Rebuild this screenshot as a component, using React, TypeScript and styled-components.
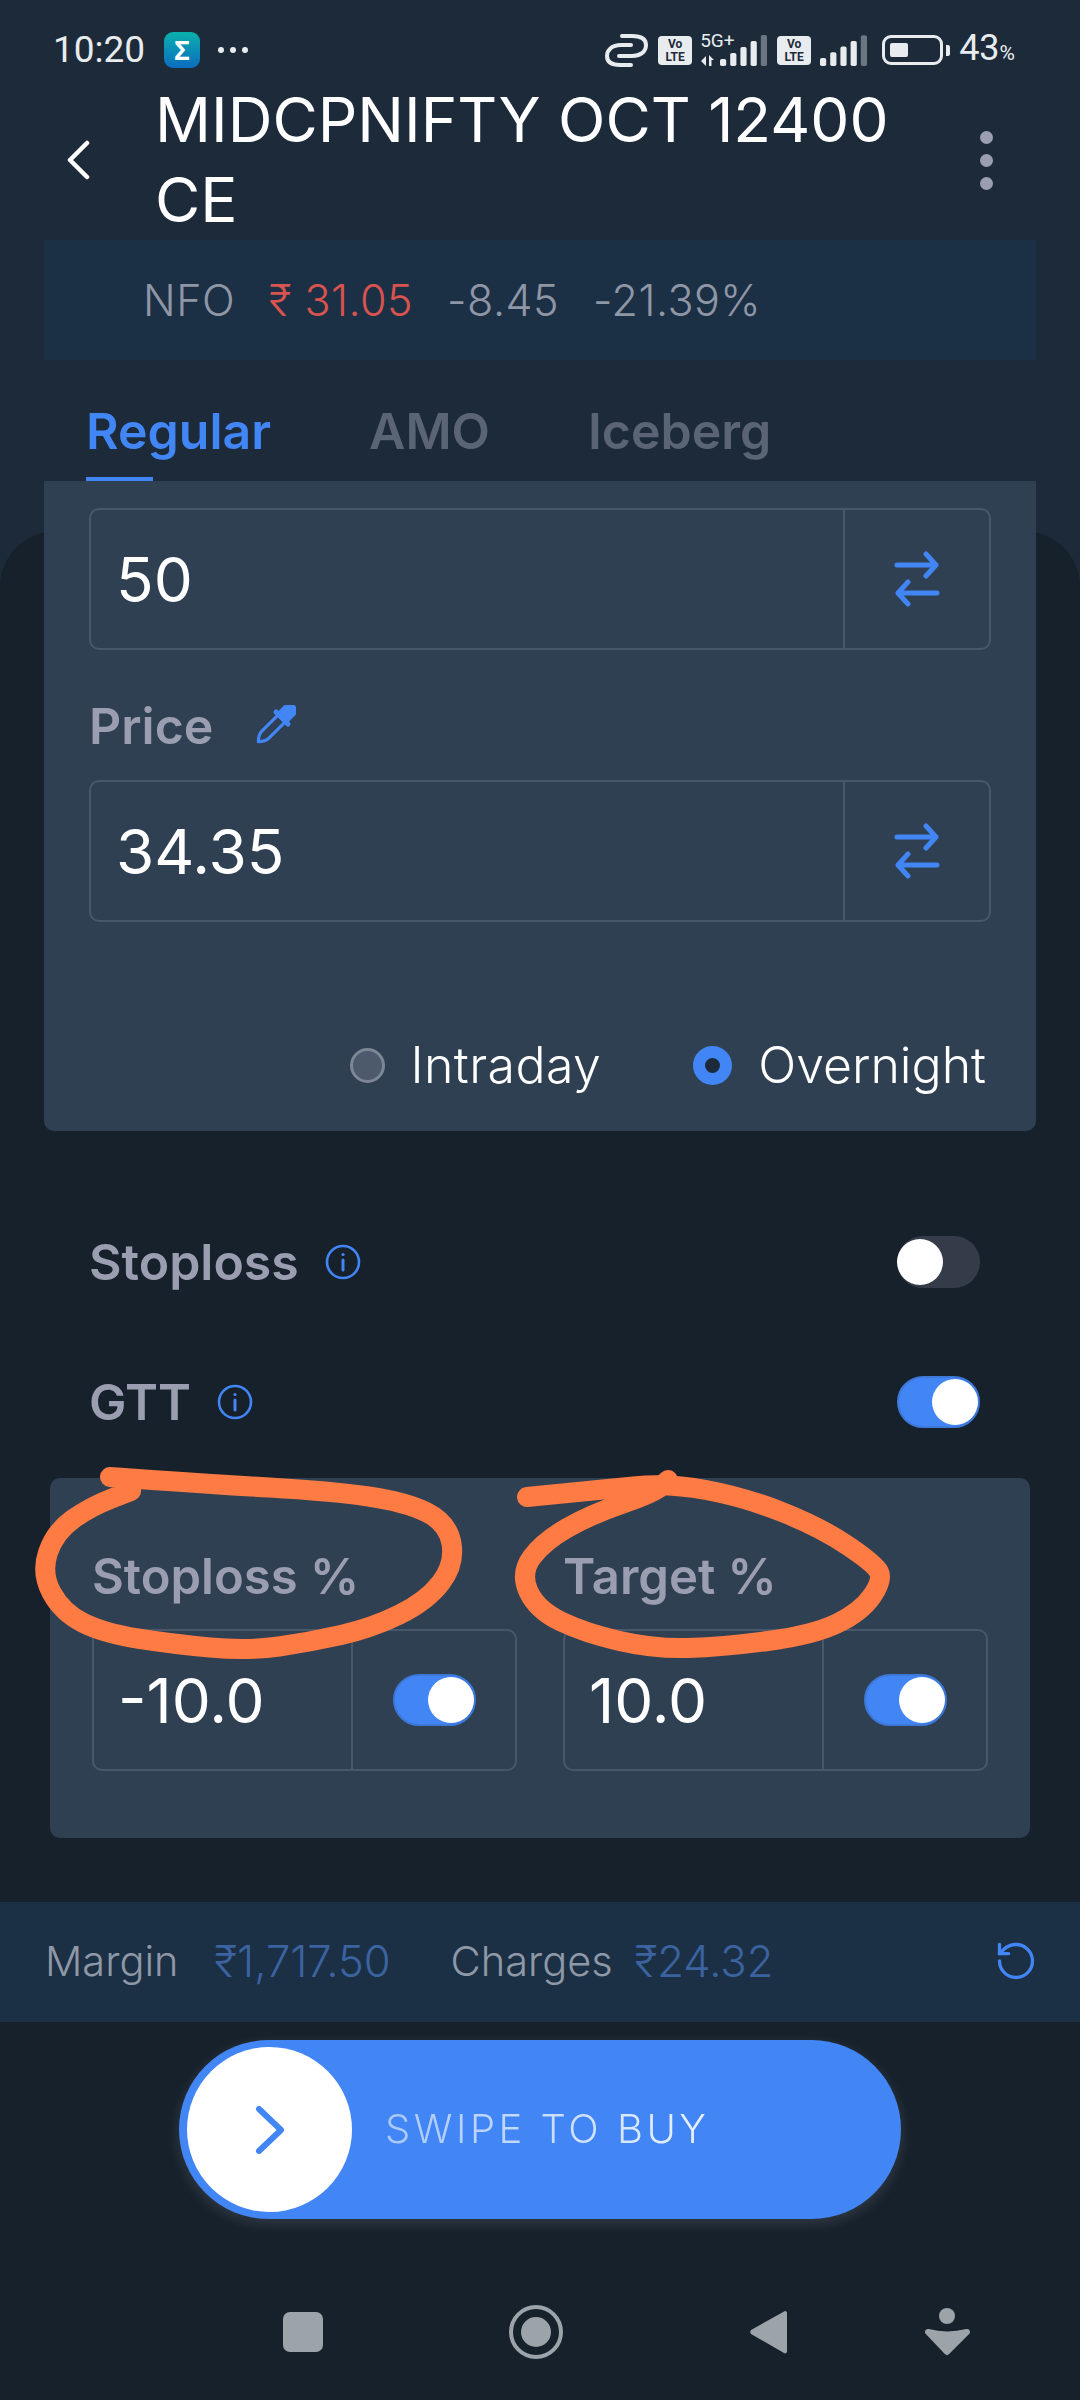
import React from "react";
import styled, { createGlobalStyle } from "styled-components";
import { RotateCcw } from "lucide-react";

const BLUE = "#4285f4";
const LABEL = "#9a9eb0";

const GlobalStyle = createGlobalStyle`
  html, body {
    margin: 0;
    padding: 0;
    background: #17212c;
  }
  * {
    box-sizing: border-box;
  }
`;

const Page = styled.div`
  position: relative;
  width: 1080px;
  height: 2400px;
  overflow: hidden;
  background: #1c2a3a;
  font-family: Inter, "Noto Sans", sans-serif;
`;

const StatusBar = styled.div`
  display: flex;
  align-items: center;
  height: 80px;
  padding: 20px 0 0 53px;
  color: #e9ecef;
  font-family: Roboto, sans-serif;
`;

const Time = styled.span`
  font-size: 37px;
  line-height: 40px;
  width: 111px;
`;

const AppBadge = styled.div`
  width: 36px;
  height: 36px;
  border-radius: 9px;
  background: linear-gradient(180deg, #0ab0ac 0%, #0c6cc0 100%);
  color: #fff;
  font: 700 26px/36px "Noto Sans", sans-serif;
  text-align: center;
`;

const MoreDots = styled.div`
  display: flex;
  gap: 6px;
  margin-left: 18px;
  & > i {
    width: 6px;
    height: 6px;
    border-radius: 50%;
    background: #e9ecef;
  }
`;

const StatusRight = styled.div`
  display: flex;
  align-items: center;
  margin-left: auto;
  padding-right: 65px;
`;

const VoLte = styled.div<{ $left: number }>`
  width: 34px;
  height: 29px;
  margin-left: ${({ $left }) => $left}px;
  border-radius: 4px;
  background: #e9ecef;
  color: #1c2a3a;
  font: 700 12px/13px Roboto, sans-serif;
  text-align: center;
  padding-top: 2px;
`;

const FiveG = styled.div`
  position: relative;
  width: 67px;
  height: 31px;
  margin-left: 8px;
`;

const FiveGLabel = styled.span`
  position: absolute;
  left: 0;
  top: -4px;
  font-size: 19px;
  line-height: 20px;
`;

const Battery = styled.div`
  width: 61px;
  height: 30px;
  margin-left: 14px;
  padding: 5px;
  border: 3px solid #e9ecef;
  border-radius: 9px;
`;

const BatteryFill = styled.div`
  width: 40%;
  height: 100%;
  border-radius: 2px;
  background: #e9ecef;
`;

const BatteryNub = styled.div`
  width: 4px;
  height: 11px;
  margin-left: 3px;
  border-radius: 0 2px 2px 0;
  background: #e9ecef;
`;

const BatteryText = styled.span`
  margin-left: 9px;
  font-size: 36px;
  line-height: 40px;
  & > small {
    font-size: 21px;
  }
`;

const Header = styled.div`
  display: flex;
  align-items: center;
  height: 160px;
  padding-left: 66px;
`;

const BackButton = styled.svg`
  width: 24px;
  height: 40px;
  margin-right: 65px;
  flex-shrink: 0;
`;

const Title = styled.h1`
  width: 780px;
  margin: 0;
  color: #fff;
  font-size: 62px;
  font-weight: 400;
  line-height: 80px;
`;

const Kebab = styled.div`
  display: flex;
  flex-direction: column;
  gap: 10px;
  margin-left: 45px;
  & > i {
    width: 13px;
    height: 13px;
    border-radius: 50%;
    background: ${LABEL};
  }
`;

const InfoBar = styled.div`
  display: flex;
  align-items: center;
  gap: 34px;
  height: 120px;
  margin: 0 44px;
  padding-left: 99px;
  background: #1c3045;
  font-size: 43px;
  font-weight: 300;
  letter-spacing: 0.5px;
  color: #8f96a6;
`;

const LastPrice = styled.span`
  color: #d9534f;
`;

const Tabs = styled.div`
  display: flex;
  align-items: flex-end;
  height: 121px;
  padding-left: 86px;
`;

const Tab = styled.div<{ $active?: boolean }>`
  position: relative;
  height: 121px;
  margin-right: 98px;
  padding-top: 41px;
  color: ${({ $active }) => ($active ? BLUE : "#5a6474")};
  font-size: 50px;
  font-weight: 600;
  line-height: 60px;
  &::after {
    content: "";
    display: ${({ $active }) => ($active ? "block" : "none")};
    position: absolute;
    left: 0;
    bottom: 0;
    width: 67px;
    height: 4px;
    background: ${BLUE};
  }
`;

const Sheet = styled.div`
  position: relative;
  &::before {
    content: "";
    position: absolute;
    top: 50px;
    left: 0;
    right: 0;
    height: 1900px;
    border-radius: 56px 56px 0 0;
    background: #17212c;
  }
  & > * {
    position: relative;
  }
`;

const OrderPanel = styled.div`
  height: 650px;
  margin: 0 44px;
  padding: 27px 45px 0;
  border-radius: 0 0 10px 10px;
  background: #304053;
`;

const Field = styled.div<{ $split: number; $height: number }>`
  display: grid;
  grid-template-columns: ${({ $split }) => $split}px 1fr;
  height: ${({ $height }) => $height}px;
  border: 2.5px solid #48576b;
  border-radius: 10px;
`;

const FieldValue = styled.div<{ $pad: number }>`
  display: flex;
  align-items: center;
  padding-left: ${({ $pad }) => $pad}px;
  color: #fff;
  font-size: 62px;
  font-weight: 400;
`;

const FieldAction = styled.div`
  display: flex;
  align-items: center;
  justify-content: center;
  border-left: 2.5px solid #48576b;
`;

const LabelRow = styled.div`
  display: flex;
  align-items: center;
  gap: 41px;
  height: 60px;
  margin: 46px 0 24px;
  color: ${LABEL};
  font-size: 50px;
  font-weight: 600;
`;

const RadioRow = styled.div`
  display: flex;
  align-items: center;
  justify-content: flex-end;
  height: 60px;
  margin-top: 112px;
  padding: 2px 5px 0 0;
`;

const RadioDot = styled.div<{ $on?: boolean }>`
  width: ${({ $on }) => ($on ? 39 : 35)}px;
  height: ${({ $on }) => ($on ? 39 : 35)}px;
  margin-right: 26px;
  border-radius: 50%;
  background: ${({ $on }) => ($on ? "#1c2a3a" : "#4c5a6b")};
  border: ${({ $on }) => ($on ? `12px solid ${BLUE}` : "3px solid #7c8694")};
`;

const RadioLabel = styled.span<{ $gap?: boolean }>`
  margin-right: ${({ $gap }) => ($gap ? 92 : 0)}px;
  color: #fff;
  font-size: 50px;
  font-weight: 300;
  letter-spacing: ${({ $gap }) => ($gap ? 0.4 : 0)}px;
`;

const ToggleList = styled.div`
  display: flex;
  flex-direction: column;
  gap: 80px;
  margin-top: 101px;
  padding: 0 100px 0 89px;
`;

const ToggleRow = styled.div`
  display: flex;
  align-items: center;
  gap: 26px;
  height: 60px;
  color: ${LABEL};
  font-size: 50px;
  font-weight: 600;
`;

const ToggleSpacer = styled.div`
  margin-left: auto;
`;

const Track = styled.div<{ $on?: boolean }>`
  display: flex;
  justify-content: ${({ $on }) => ($on ? "flex-end" : "flex-start")};
  align-items: center;
  width: 83px;
  height: 52px;
  border-radius: 26px;
  background: ${({ $on }) => ($on ? BLUE : "#333c48")};
  border: ${({ $on }) => ($on ? "2px solid #3d77d8" : "none")};
  &::after {
    content: "";
    width: 46px;
    height: 46px;
    border-radius: 50%;
    background: #fff;
  }
`;

const GttPanel = styled.div`
  display: grid;
  grid-template-columns: 425px 425px;
  gap: 0 46px;
  height: 360px;
  margin: 46px 50px 0;
  padding: 69px 42px 0;
  border-radius: 10px;
  background: #304053;
`;

const GttLabel = styled.div`
  height: 60px;
  margin-bottom: 22px;
  color: ${LABEL};
  font-size: 49px;
  font-weight: 600;
  line-height: 60px;
`;

const ToggleCell = styled(FieldAction)``;

const SummaryBar = styled.div`
  display: flex;
  align-items: center;
  height: 120px;
  margin-top: 64px;
  padding: 0 42px 2px 45px;
  background: #1c3045;
  font-weight: 300;
`;

const SummaryLabel = styled.span<{ $gap: number }>`
  margin-right: ${({ $gap }) => $gap}px;
  color: #8f98a6;
  font-size: 41.5px;
`;

const SummaryValue = styled.span<{ $gap?: number }>`
  margin-right: ${({ $gap }) => $gap ?? 0}px;
  color: #3a63a0;
  font-size: 43.5px;
`;

const RefreshSlot = styled.div`
  display: flex;
  margin-left: auto;
  color: ${BLUE};
`;

const Swipe = styled.div`
  display: flex;
  align-items: center;
  width: 722px;
  height: 179px;
  margin: 18px 0 0 179px;
  padding-left: 8px;
  border-radius: 90px;
  background: ${BLUE};
  box-shadow: 0 4px 14px rgba(255, 255, 255, 0.12);
`;

const SwipeKnob = styled.div`
  display: flex;
  align-items: center;
  justify-content: center;
  width: 165px;
  height: 165px;
  margin-right: 33px;
  border-radius: 50%;
  background: #fff;
`;

const SwipeText = styled.span`
  margin-bottom: 3px;
  background: linear-gradient(90deg, #a8c8fb 0%, #eaf2fe 100%);
  -webkit-background-clip: text;
  background-clip: text;
  color: transparent;
  font-size: 40px;
  font-weight: 300;
  letter-spacing: 3.5px;
`;

const NavBar = styled.div`
  display: flex;
  align-items: center;
  height: 60px;
  margin-top: 83px;
  padding-left: 283px;
`;

const NavSlot = styled.div<{ $left?: number }>`
  display: flex;
  margin-left: ${({ $left }) => $left ?? 0}px;
`;

const Scribble = styled.svg`
  position: absolute;
  left: 0;
  top: 0;
  pointer-events: none;
`;

const STOPLOSS_RING: number[][] = [
  [110, 1477], [207, 1484], [331, 1491], [406, 1502], [448, 1523], [455, 1564],
  [427, 1601], [372, 1628], [310, 1642], [248, 1651], [172, 1644], [103, 1633],
  [62, 1612], [41, 1573], [55, 1532], [90, 1507], [131, 1491],
];

const TARGET_RING: number[][] = [
  [527, 1497], [599, 1490], [668, 1483], [744, 1497], [820, 1527], [875, 1564],
  [883, 1580], [861, 1612], [813, 1635], [723, 1647], [654, 1649], [585, 1633],
  [537, 1610], [520, 1573], [544, 1541], [592, 1514], [654, 1493], [668, 1480],
];

// runs the pen through the midpoints so the ring stays smooth
const smoothPath = (pts: number[][]) => {
  let d = `M${pts[0][0]} ${pts[0][1]}`;
  for (let i = 1; i < pts.length - 1; i++) {
    const mx = (pts[i][0] + pts[i + 1][0]) / 2;
    const my = (pts[i][1] + pts[i + 1][1]) / 2;
    d += ` Q${pts[i][0]} ${pts[i][1]} ${mx} ${my}`;
  }
  const last = pts[pts.length - 1];
  return `${d} L${last[0]} ${last[1]}`;
};

const SwapIcon = () => (
  <svg width="46" height="56" viewBox="0 0 46 56" fill="none" stroke={BLUE} strokeWidth="5" strokeLinecap="round" strokeLinejoin="round">
    <path d="M3 14H42M32 3l10 11-10 11" />
    <path d="M43 42H4M14 31 4 42l10 11" />
  </svg>
);

const InfoIcon = () => (
  <svg width="36" height="36" viewBox="0 0 36 36" fill="none" stroke={BLUE} strokeWidth="2.6">
    <circle cx="18" cy="18" r="16" />
    <path d="M18 16v10" strokeLinecap="round" strokeWidth="3" />
    <circle cx="18" cy="10.5" r="1.6" fill={BLUE} stroke="none" />
  </svg>
);

const Dropper = () => (
  <svg width="42" height="42" viewBox="0 0 42 42" fill="none">
    <g transform="translate(22 19) rotate(45)">
      <path d="M-7.5-10v-9a7.5 7.5 0 0 1 15 0v9z" fill={BLUE} />
      <rect x="-11" y="-11" width="22" height="5" rx="2.5" fill={BLUE} />
      <path d="M-5-7V15q0 5 5 10 5-5 5-10V-7" stroke={BLUE} strokeWidth="3.2" strokeLinejoin="round" />
    </g>
  </svg>
);

const Signal = ({ width }: { width: number }) => (
  <svg width={width} height="31" viewBox={`0 0 ${width} 31`}>
    {[0, 1, 2, 3, 4].map((i) => (
      <rect
        key={i}
        x={i * 10.2}
        y={23 - i * 5.7}
        width="6.2"
        height={8 + i * 5.7}
        rx="1.8"
        fill={i === 4 ? "#6b7683" : "#e9ecef"}
      />
    ))}
  </svg>
);

const Toggle = ({ on }: { on?: boolean }) => <Track $on={on} />;

export default function App() {
  return (
    <Page>
      <GlobalStyle />
      <StatusBar>
        <Time>10:20</Time>
        <AppBadge>Σ</AppBadge>
        <MoreDots>
          <i />
          <i />
          <i />
        </MoreDots>
        <StatusRight>
          <svg width="44" height="34" viewBox="0 0 44 34" fill="none" stroke="#e9ecef" strokeWidth="4" strokeLinecap="round">
            <path d="M27 12H17C8 12 3 17 3 23s5 9 13 9h11" />
            <path d="M15 23h13c8 0 14-4 14-11S35 3 28 3H18" />
          </svg>
          <VoLte $left={10}>
            Vo
            <br />
            LTE
          </VoLte>
          <FiveG>
            <FiveGLabel>5G+</FiveGLabel>
            <svg width="67" height="31" viewBox="0 0 67 31">
              <path d="M1 26l5-5v10zM9 20l5 5H9zM9 25h2.5v6H9z" fill="#e9ecef" />
              <g transform="translate(20 0)">
                {[0, 1, 2, 3, 4].map((i) => (
                  <rect
                    key={i}
                    x={i * 10.2}
                    y={24 - i * 6}
                    width="6.2"
                    height={7 + i * 6}
                    rx="1.8"
                    fill={i === 4 ? "#6b7683" : "#e9ecef"}
                  />
                ))}
              </g>
            </svg>
          </FiveG>
          <VoLte $left={10}>
            Vo
            <br />
            LTE
          </VoLte>
          <NavSlot $left={9}>
            <Signal width={48} />
          </NavSlot>
          <Battery>
            <BatteryFill />
          </Battery>
          <BatteryNub />
          <BatteryText>
            43<small>%</small>
          </BatteryText>
        </StatusRight>
      </StatusBar>

      <Header>
        <BackButton viewBox="0 0 24 40" fill="none" stroke="#fff" strokeWidth="4.5" strokeLinecap="round" strokeLinejoin="round">
          <path d="M21 3 4 20l17 17" />
        </BackButton>
        <Title>MIDCPNIFTY OCT 12400 CE</Title>
        <Kebab>
          <i />
          <i />
          <i />
        </Kebab>
      </Header>

      <InfoBar>
        <span>NFO</span>
        <LastPrice>₹ 31.05</LastPrice>
        <span>-8.45</span>
        <span>-21.39%</span>
      </InfoBar>

      <Tabs>
        <Tab $active>Regular</Tab>
        <Tab>AMO</Tab>
        <Tab>Iceberg</Tab>
      </Tabs>

      <Sheet>
        <OrderPanel>
          <Field $split={752} $height={142}>
            <FieldValue $pad={25}>50</FieldValue>
            <FieldAction>
              <SwapIcon />
            </FieldAction>
          </Field>
          <LabelRow>
            Price
            <Dropper />
          </LabelRow>
          <Field $split={752} $height={142}>
            <FieldValue $pad={25}>34.35</FieldValue>
            <FieldAction>
              <SwapIcon />
            </FieldAction>
          </Field>
          <RadioRow>
            <RadioDot />
            <RadioLabel $gap>Intraday</RadioLabel>
            <RadioDot $on />
            <RadioLabel>Overnight</RadioLabel>
          </RadioRow>
        </OrderPanel>

        <ToggleList>
          <ToggleRow>
            Stoploss
            <InfoIcon />
            <ToggleSpacer>
              <Toggle />
            </ToggleSpacer>
          </ToggleRow>
          <ToggleRow>
            GTT
            <InfoIcon />
            <ToggleSpacer>
              <Toggle on />
            </ToggleSpacer>
          </ToggleRow>
        </ToggleList>

        <GttPanel>
          <div>
            <GttLabel>Stoploss %</GttLabel>
            <Field $split={257} $height={142}>
              <FieldValue $pad={24}>-10.0</FieldValue>
              <ToggleCell>
                <Toggle on />
              </ToggleCell>
            </Field>
          </div>
          <div>
            <GttLabel>Target %</GttLabel>
            <Field $split={257} $height={142}>
              <FieldValue $pad={24}>10.0</FieldValue>
              <ToggleCell>
                <Toggle on />
              </ToggleCell>
            </Field>
          </div>
        </GttPanel>

        <SummaryBar>
          <SummaryLabel $gap={36}>Margin</SummaryLabel>
          <SummaryValue $gap={60}>₹1,717.50</SummaryValue>
          <SummaryLabel $gap={22}>Charges</SummaryLabel>
          <SummaryValue>₹24.32</SummaryValue>
          <RefreshSlot>
            <RotateCcw size={44} strokeWidth={1.8} />
          </RefreshSlot>
        </SummaryBar>

        <Swipe>
          <SwipeKnob>
            <svg width="30" height="50" viewBox="0 0 30 50" fill="none" stroke={BLUE} strokeWidth="6" strokeLinecap="round" strokeLinejoin="round">
              <path d="M4 4l22 21L4 46" />
            </svg>
          </SwipeKnob>
          <SwipeText>SWIPE TO BUY</SwipeText>
        </Swipe>

        <NavBar>
          <NavSlot>
            <svg width="40" height="40" viewBox="0 0 40 40">
              <rect width="40" height="40" rx="7" fill="#9ca3a9" />
            </svg>
          </NavSlot>
          <NavSlot $left={186}>
            <svg width="54" height="54" viewBox="0 0 54 54" fill="none">
              <circle cx="27" cy="27" r="25" stroke="#9ca3a9" strokeWidth="4" />
              <circle cx="27" cy="27" r="15" fill="#9ca3a9" />
            </svg>
          </NavSlot>
          <NavSlot $left={187}>
            <svg width="37" height="44" viewBox="0 0 37 44">
              <path d="M35 1c1.5 0 2 1 2 2v38c0 2-1.5 3-3 2L1 24c-1-1-1-3 0-4z" fill="#9ca3a9" />
            </svg>
          </NavSlot>
          <NavSlot $left={138}>
            <svg width="45" height="49" viewBox="0 0 45 49">
              <circle cx="22" cy="8" r="8" fill="#9ca3a9" />
              <path d="M3 24Q22 29 42 24L22 44Z" fill="#9ca3a9" stroke="#9ca3a9" strokeWidth="6" strokeLinejoin="round" />
            </svg>
          </NavSlot>
        </NavBar>
      </Sheet>

      <Scribble width="1080" height="2400" viewBox="0 0 1080 2400" fill="none" stroke="#fe7b43" strokeWidth="20" strokeLinecap="round" strokeLinejoin="round">
        <path d={smoothPath(STOPLOSS_RING)} />
        <path d={smoothPath(TARGET_RING)} />
      </Scribble>
    </Page>
  );
}
